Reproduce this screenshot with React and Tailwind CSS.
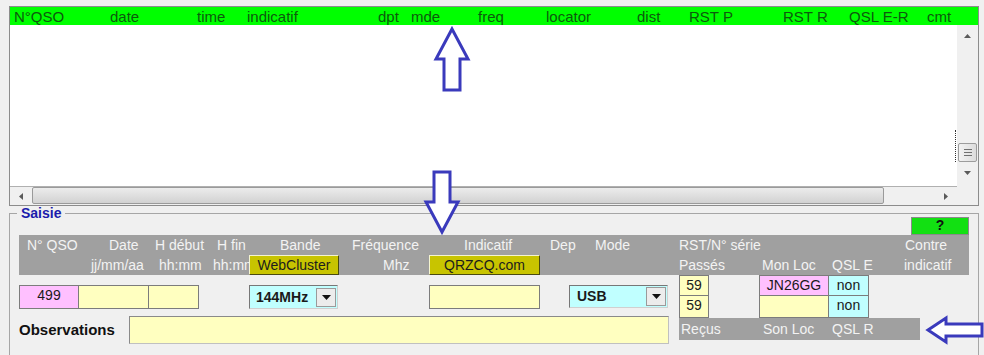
export default function App() {
  const cols = [
    ["N°QSO", "w-[96px]"],
    ["date", "w-[87px]"],
    ["time", "w-[50px]"],
    ["indicatif", "w-[131px]"],
    ["dpt", "w-[33px]"],
    ["mde", "w-[67px]"],
    ["freq", "w-[68px]"],
    ["locator", "w-[91px]"],
    ["dist", "w-[52px]"],
    ["RST P", "w-[94px]"],
    ["RST R", "w-[66px]"],
    ["QSL E-R", "w-[78px]"],
    ["cmt", "w-[40px]"],
  ];

  const Tri = ({ dir }) => {
    const pts = {
      up: "0,4 3.5,0 7,4",
      down: "0,0 7,0 3.5,4",
      left: "4,0 4,7 0,3.5",
      right: "0,0 0,7 4,3.5",
    }[dir];
    const w = dir === "up" || dir === "down" ? 7 : 4;
    const h = dir === "up" || dir === "down" ? 4 : 7;
    return (
      <svg width={w} height={h} viewBox={`0 0 ${w} ${h}`}>
        <polygon points={pts} fill="#5a5a5a" />
      </svg>
    );
  };

  const DropBtn = () => (
    <span className="w-[20px] h-[19px] mr-[1px] bg-[#ececec] border border-[#9a9a9a] flex items-center justify-center shrink-0">
      <svg width="9" height="5" viewBox="0 0 9 5">
        <polygon points="0,0 9,0 4.5,5" fill="#111" />
      </svg>
    </span>
  );

  return (
    <div className="relative w-[984px] h-[355px] overflow-hidden bg-[#f0f0f0] pt-[6px] font-['Liberation_Sans',Arial,sans-serif] text-[#1a1a1a]">
      {/* QSO list */}
      <div className="ml-[9px] w-[970px] border border-[#8c8c8c] flex flex-col">
        <div className="flex h-[18px] items-center pl-[4px] bg-[#00ff00] text-[15px] leading-none text-[#0d5a0d] whitespace-nowrap">
          {cols.map(([t, w]) => (
            <span key={t} className={`${w} shrink-0`}>
              {t}
            </span>
          ))}
        </div>
        <div className="flex h-[161px]">
          <div className="relative flex-1 bg-white">
            <div className="absolute right-[1px] top-[105px] h-[32px] border-l border-dotted border-[#303030]" />
          </div>
          <div className="w-[21px] flex flex-col bg-[#f0f0f0]">
            <div className="h-[21px] flex items-center justify-center">
              <Tri dir="up" />
            </div>
            <div className="h-[97px]" />
            <div className="h-[19px] mx-[1px] rounded-[2px] border border-[#9c9c9c] bg-linear-to-r from-[#f2f2f2] to-[#dcdcdc] flex items-center justify-center">
              <svg width="8" height="9" viewBox="0 0 8 9">
                <rect x="0" y="1" width="8" height="1" fill="#707070" />
                <rect x="0" y="4" width="8" height="1" fill="#707070" />
                <rect x="0" y="7" width="8" height="1" fill="#707070" />
              </svg>
            </div>
            <div className="h-[22px] flex items-center justify-center">
              <Tri dir="down" />
            </div>
          </div>
        </div>
        <div className="flex h-[19px]">
          <div className="flex-1 flex border-t border-[#b0b0b0] bg-[#f0f0f0]">
            <div className="w-[22px] flex items-center justify-center">
              <Tri dir="left" />
            </div>
            <div className="w-[852px] h-[17px] mt-[0px] rounded-[2px] border border-[#9a9a9a] bg-linear-to-b from-[#ececec] to-[#d2d2d2]" />
            <div className="flex-1" />
            <div className="w-[22px] flex items-center justify-center">
              <Tri dir="right" />
            </div>
          </div>
          <div className="w-[21px] bg-[#f0f0f0]" />
        </div>
      </div>

      {/* Saisie group */}
      <div className="relative mt-[7px] ml-[9px] w-[970px] h-[150px] border-t border-x border-[#a6a6a6] px-[9px] pt-[3px]">
        <span className="absolute left-[7px] top-[-8px] bg-[#f0f0f0] px-[4px] text-[14px] leading-[14px] font-bold text-[#1c1cac]">
          Saisie
        </span>
        <div className="flex justify-end">
          <button className="w-[58px] h-[18px] bg-[#12e012] border border-[#8a8a8a] text-[14px] leading-[15px] font-bold text-[#111] flex items-start justify-center">
            ?
          </button>
        </div>

        {/* gray labels band */}
        <div className="bg-[#a0a0a0] h-[40px] text-[14px] leading-none text-[#f3f3f3]">
          <div className="flex h-[20px] items-center pl-[8px] whitespace-nowrap">
            <span className="w-[82px] shrink-0">N° QSO</span>
            <span className="w-[46px] shrink-0">Date</span>
            <span className="w-[62px] shrink-0">H début</span>
            <span className="w-[63px] shrink-0">H fin</span>
            <span className="w-[72px] shrink-0">Bande</span>
            <span className="w-[112px] shrink-0">Fréquence</span>
            <span className="w-[86px] shrink-0">Indicatif</span>
            <span className="w-[45px] shrink-0">Dep</span>
            <span className="w-[84px] shrink-0">Mode</span>
            <span className="w-[226px] shrink-0">RST/N° série</span>
            <span className="shrink-0">Contre</span>
          </div>
          <div className="flex h-[20px] items-center whitespace-nowrap">
            <span className="w-[72px] shrink-0" />
            <span className="w-[68px] shrink-0">jj/mm/aa</span>
            <span className="w-[54px] shrink-0">hh:mm</span>
            <span className="w-[36px] shrink-0 overflow-hidden">hh:mm</span>
            <button className="w-[90px] h-[20px] shrink-0 bg-[#c8c400] border border-t-[#f4f4d0] border-l-[#f4f4d0] border-r-[#4a4a10] border-b-[#4a4a10] text-[14px] text-[#1c1c1c] flex items-center justify-center">
              WebCluster
            </button>
            <span className="w-[44px] shrink-0" />
            <span className="w-[46px] shrink-0">Mhz</span>
            <button className="w-[111px] h-[20px] shrink-0 bg-[#c8c400] border border-t-[#f4f4d0] border-l-[#f4f4d0] border-r-[#4a4a10] border-b-[#4a4a10] text-[14px] text-[#1c1c1c] flex items-center justify-center">
              QRZCQ.com
            </button>
            <span className="w-[139px] shrink-0" />
            <span className="w-[83px] shrink-0">Passés</span>
            <span className="w-[70px] shrink-0">Mon Loc</span>
            <span className="w-[72px] shrink-0">QSL E</span>
            <span className="shrink-0">indicatif</span>
          </div>
        </div>

        {/* inputs */}
        <div className="flex gap-[10px] items-start">
          <div className="w-[650px] shrink-0 flex flex-col">
            <div className="mt-[10px] flex h-[24px] text-[14px]">
              <div className="w-[60px] h-[24px] bg-[#ffc0ff] border border-[#7c7c7c] text-center leading-[18px]">
                499
              </div>
              <div className="w-[70px] h-[24px] bg-[#ffffc0] border-y border-r border-[#7c7c7c]" />
              <div className="w-[50px] h-[24px] bg-[#ffffc0] border-y border-r border-[#7c7c7c]" />
              <div className="w-[50px]" />
              <div className="w-[89px] h-[24px] flex items-center bg-[#c0ffff] border border-t-[#777] border-l-[#777] border-r-[#d0d0d0] border-b-[#d0d0d0] pl-[6px]">
                <span className="flex-1 font-bold text-[14px]">144MHz</span>
                <DropBtn />
              </div>
              <div className="w-[91px]" />
              <div className="w-[111px] h-[24px] bg-[#ffffc0] border border-[#7c7c7c]" />
              <div className="w-[29px]" />
              <div className="w-[99px] h-[23px] flex items-center bg-[#c0ffff] border border-t-[#777] border-l-[#777] border-r-[#d0d0d0] border-b-[#d0d0d0] pl-[7px]">
                <span className="flex-1 font-bold text-[14px]">USB</span>
                <DropBtn />
              </div>
            </div>
            <div className="mt-[7px] flex h-[28px] items-center">
              <span className="w-[110px] font-bold text-[15px] text-[#111]">Observations</span>
              <div className="w-[540px] h-[28px] bg-[#ffffc0] border border-[#c0c0c0] border-t-[#8a8a8a] border-l-[#8a8a8a]" />
            </div>
          </div>

          <div className="w-[241px] flex flex-col text-[14px]">
            <div className="flex">
              <div className="w-[30px] flex flex-col">
                <div className="h-[21px] bg-[#ffffc0] border border-[#7c7c7c] text-center leading-[19px]">59</div>
                <div className="h-[22px] bg-[#ffffc0] border-x border-b border-[#7c7c7c] text-center leading-[19px]">59</div>
              </div>
              <div className="w-[50px]" />
              <div className="w-[70px] flex flex-col">
                <div className="h-[21px] bg-[#ffc0ff] border border-[#7c7c7c] text-center leading-[18px]">JN26GG</div>
                <div className="h-[22px] bg-[#ffffc0] border-x border-b border-[#7c7c7c]" />
              </div>
              <div className="w-[40px] flex flex-col">
                <div className="h-[21px] bg-[#c0ffff] border-y border-r border-[#7c7c7c] text-center leading-[18px]">non</div>
                <div className="h-[22px] bg-[#c0ffff] border-b border-r border-[#7c7c7c] text-center leading-[19px]">non</div>
              </div>
            </div>
            <div className="h-[22px] bg-[#a0a0a0] flex items-center text-[#f3f3f3] whitespace-nowrap">
              <span className="w-[84px] pl-[2px] shrink-0">Reçus</span>
              <span className="w-[69px] shrink-0">Son Loc</span>
              <span className="shrink-0">QSL R</span>
            </div>
          </div>
        </div>
      </div>

      {/* annotation arrows */}
      <svg
        className="absolute left-0 top-0 pointer-events-none"
        width="984"
        height="355"
        viewBox="0 0 984 355"
      >
        <g fill="#ffffff" stroke="#3a3abc" strokeWidth="3" strokeLinejoin="miter">
          <polygon points="452,29 468,59 460,59 460,90 444,90 444,59 436,59" />
          <polygon points="434,172 450,172 450,202 458,202 442,232 426,202 434,202" />
          <polygon points="928,330 946,318 946,324 982,324 982,336 946,336 946,342" />
        </g>
      </svg>
    </div>
  );
}
